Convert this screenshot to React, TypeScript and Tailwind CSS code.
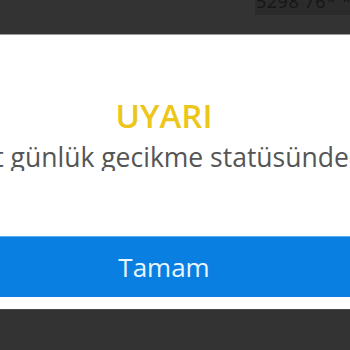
export default function App() {
  return (
    <div className="w-[350px] h-[350px] overflow-hidden flex flex-col bg-white" style={{ fontFamily: '"Open Sans", sans-serif' }}>
      <div className="h-[35px] bg-[#333333] border-b border-[#9a9a9a] flex justify-end shrink-0">
        <div className="h-[15px] w-[95px] bg-[#2b2b2b] overflow-hidden relative">
          <span className="absolute left-[1px] top-[-8px] text-[18px] leading-none text-[#161616] whitespace-nowrap tracking-[0.5px]">5298 76* **</span>
        </div>
      </div>
      <div className="flex-1 flex flex-col">
        <div className="h-[64px]" />
        <div className="pr-[22px] text-center text-[33px] leading-none font-semibold text-[#ecc61a]">UYARI</div>
        <div className="mt-[12px] pr-[19px] flex justify-center overflow-hidden whitespace-nowrap text-[26.5px] leading-none text-[#555555]">
          <span className="shrink-0">adet günlük gecikme statüsündedir</span>
        </div>
        <div className="flex-1" />
        <div className="h-[61px] bg-[#0a7fe2] border-t border-[#5aaeef] flex items-center justify-center pr-[22px] text-[26px] text-[#e8f6ff]">Tamam</div>
        <div className="h-[12px]" />
      </div>
      <div className="h-[41px] bg-[#333333] border-t border-[#4a4a4a] shrink-0" />
    </div>
  );
}
